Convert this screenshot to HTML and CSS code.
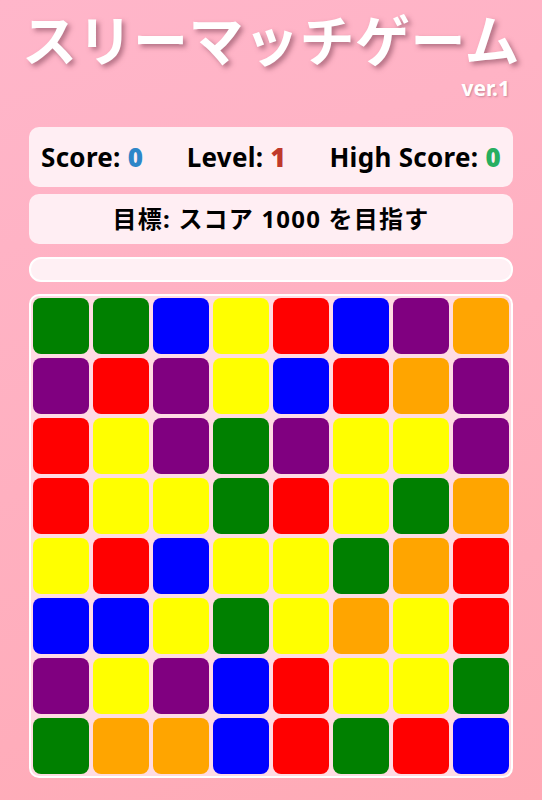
FILE: index.html
```html
<!DOCTYPE html>
<html lang="ja">
<head>
  <meta charset="UTF-8" />
  <meta name="viewport" content="width=device-width, initial-scale=1" />
  <title>スリーマッチゲーム</title>
  <link rel="stylesheet" href="styles.css">
</head>
<body>
  <header>
    <h1>スリーマッチゲーム</h1>
    <div class="version">ver.1</div>
  </header>

  <div class="panel painel-pontos">
    <span>Score: <b class="score">0</b></span>
    <span>Level: <b class="level">1</b></span>
    <span>High Score: <b class="high">0</b></span>
  </div>

  <div class="panel objetivo">目標: スコア 1000 を目指す</div>

  <div class="progress"><div class="progress-fill"></div></div>

  <div class="board" id="board"></div>

  <script>
    const cores = {
      G: 'green', B: 'blue', Y: 'yellow', R: 'red', P: 'purple', O: 'orange'
    };
    const linhas = [
      'GGBYRBPO',
      'PRPYBROP',
      'RYPGPYYP',
      'RYYGRYGO',
      'YRBYYGOR',
      'BBYGYOYR',
      'PYPBRYYG',
      'GOOBRGRB'
    ];
    const board = document.getElementById('board');
    linhas.forEach(linha => {
      linha.split('').forEach(c => {
        const cell = document.createElement('div');
        cell.className = 'cell ' + cores[c];
        board.appendChild(cell);
      });
    });
  </script>
</body>
</html>
```

FILE: styles.css
```css
body {
  font-family: 'Noto Sans', 'Noto Sans CJK JP', sans-serif;
  background: linear-gradient(160deg, #ffb6ca, #ffaab6);
  margin: 0;
  padding: 0 29px;
  min-height: 800px;
  box-sizing: border-box;
}
header {
  text-align: center;
  color: #ffffff;
}
header h1 {
  font-family: 'Noto Sans CJK JP', sans-serif;
  font-size: 55px;
  font-weight: bold;
  line-height: 60px;
  margin: 7px -15px 0;
  letter-spacing: 0.5px;
  text-shadow: 3px 3px 5px rgba(120, 60, 80, 0.55);
}
.version {
  text-align: right;
  font-size: 21px;
  font-weight: bold;
  padding-right: 3px;
  margin-top: 9px;
  line-height: 24px;
  text-shadow: 1px 1px 2px rgba(120, 60, 80, 0.4);
}
.panel {
  background-color: #ffeef3;
  border-radius: 10px;
  font-weight: bold;
}
.painel-pontos {
  margin-top: 27px;
  height: 60px;
  display: flex;
  align-items: center;
  justify-content: space-between;
  padding: 0 12px;
  font-size: 26px;
  letter-spacing: 0.3px;
}
.score { color: #2e86c8; }
.level { color: #c0392b; }
.high { color: #27ae60; }
.objetivo {
  margin-top: 7px;
  height: 50px;
  line-height: 50px;
  text-align: center;
  font-size: 24px;
  letter-spacing: 1.2px;
}
.progress {
  margin-top: 13px;
  height: 21px;
  background-color: #fff0f4;
  border: 2px solid #ffffff;
  border-radius: 12px;
}
.progress-fill {
  width: 0;
}
.board {
  margin-top: 12px;
  display: grid;
  grid-template-columns: repeat(8, 56px);
  gap: 4px;
  padding: 2px;
  border: 2px solid #ffffff;
  border-radius: 10px;
  background-color: #ffdbe3;
  width: 476px;
}
.cell {
  height: 56px;
  border-radius: 8px;
}
.green { background-color: #008000; }
.blue { background-color: #0000ff; }
.yellow { background-color: #ffff00; }
.red { background-color: #ff0000; }
.purple { background-color: #800080; }
.orange { background-color: #ffa500; }
```
